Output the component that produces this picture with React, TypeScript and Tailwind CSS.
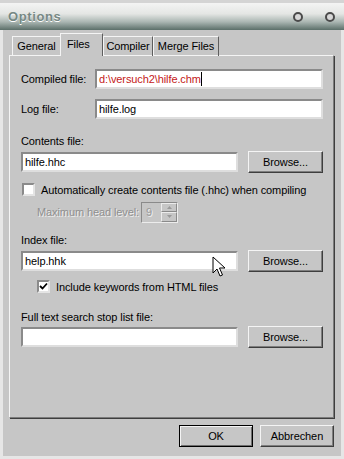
import React from "react";

const font = { fontFamily: '"Liberation Sans", Arial, sans-serif' };

export default function App() {
  return (
    <div
      style={font}
      className="relative w-[344px] h-[459px] overflow-hidden bg-[#c6c6c6] text-[11px] tracking-[-0.1px] leading-[14px] text-black whitespace-nowrap"
    >
      <TitleBar />
      <div className="h-[459px] border-l-[3px] border-r-[3px] border-b-[3px] border-l-[#e6e6e6] border-r-[#e6e6e6] border-b-[#e6e6e6] -mt-[30px] pt-[30px]">
        <div className="pl-[6px] pr-[7px]">
          <Tabs />
          <div className="h-[363px] border border-t-[#f4f4f4] border-l-[#f4f4f4] border-r-[#7c7c7c] border-b-[#7c7c7c] shadow-[1px_1px_0_#3e3e3e] pl-[11px] pr-[10px]">
            <div className="mt-[13px] flex items-center h-[20px]">
              <span className="w-[74px]">Compiled file:</span>
              <Field value="d:\versuch2\hilfe.chm" red className="flex-1" />
            </div>
            <div className="mt-[10px] flex items-center h-[20px]">
              <span className="w-[74px]">Log file:</span>
              <Field value="hilfe.log" className="flex-1" />
            </div>

            <div className="mt-[15px] h-[14px]">Contents file:</div>
            <div className="mt-[3px] flex items-center gap-[10px] h-[22px]">
              <Field value="hilfe.hhc" className="w-[217px]" />
              <Button>Browse...</Button>
            </div>
            <div className="mt-[10px] flex items-center gap-[6px] h-[13px] pl-[1px]">
              <Check />
              <span>Automatically create contents file (.hhc) when compiling</span>
            </div>
            <div className="mt-[5px] flex items-center h-[22px] pl-[16px]">
              <span className="text-[#8f8f8f] [text-shadow:1px_1px_0_#efefef] w-[104px] shrink-0">Maximum head level:</span>
              <Spinner />
            </div>

            <div className="mt-[10px] h-[14px]">Index file:</div>
            <div className="mt-[3px] flex items-center gap-[10px] h-[22px]">
              <Field value="help.hhk" className="w-[217px]" />
              <Button>Browse...</Button>
            </div>
            <div className="mt-[8px] flex items-center gap-[6px] h-[13px] pl-[16px]">
              <Check checked />
              <span>Include keywords from HTML files</span>
            </div>

            <div className="mt-[17px] h-[14px]">Full text search stop list file:</div>
            <div className="mt-[2px] flex items-center gap-[10px] h-[22px]">
              <Field value="" className="w-[217px]" />
              <Button>Browse...</Button>
            </div>
          </div>

          <div className="mt-[7px] flex justify-end gap-[7px] pr-0">
            <button className="w-[74px] h-[22px] border border-black bg-[#c6c6c6] shadow-[inset_1px_1px_0_#f4f4f4,inset_-1px_-1px_0_#6e6e6e]">
              OK
            </button>
            <Button wide>Abbrechen</Button>
          </div>
        </div>
      </div>
      <Cursor />
    </div>
  );
}

function TitleBar() {
  return (
    <div className="relative h-[30px] border-t-[3px] border-t-[#d4d4d4] bg-[linear-gradient(to_bottom,#f4f4f4_0%,#e4e6e4_40%,#aab6b2_70%,#5b6f69_100%)] flex items-center pl-[8px]">
      <span className="font-bold text-[13px] tracking-[0.6px] text-[#768884] [text-shadow:0_1px_0_#ffffff]">
        Options
      </span>
      <div className="ml-auto flex gap-[22px] pr-[9px]">
        <span className="w-[10px] h-[10px] rounded-full border-[2px] border-[#4a4a4a] bg-[#d8d8d8]" />
        <span className="w-[10px] h-[10px] rounded-full border-[2px] border-[#4a4a4a] bg-[#d8d8d8]" />
      </div>
    </div>
  );
}

function Tabs() {
  return (
    <div className="mt-[3px] h-[23px] flex items-end pl-[3px] -mb-[1px] relative z-10">
      <Tab label="General" w={49} />
      <div className="w-[43px] h-[23px] -ml-[1px] border border-b-0 border-t-[#f4f4f4] border-l-[#f4f4f4] border-r-[#5e5e5e] bg-[#c6c6c6] flex items-start pt-[3px] pl-[6px]">
        Files
      </div>
      <Tab label="Compiler" w={50} />
      <Tab label="Merge Files" w={66} />
    </div>
  );
}

function Tab({ label, w }: { label: string; w: number }) {
  return (
    <div
      style={{ width: w }}
      className="h-[20px] border border-b-0 border-t-[#f4f4f4] border-l-[#f4f4f4] border-r-[#5e5e5e] flex items-center justify-center pb-[1px]"
    >
      {label}
    </div>
  );
}

function Field({ value, red, className }: { value: string; red?: boolean; className?: string }) {
  return (
    <div
      className={`h-[20px] bg-white border-2 border-t-[#8a8a8a] border-l-[#8a8a8a] border-r-[#dedede] border-b-[#dedede] flex items-center pl-[2px] ${className}`}
    >
      <span className={red ? "text-[#c41818]" : ""}>{value}</span>
      {red && <span className="w-[1px] h-[14px] bg-black" />}
    </div>
  );
}

function Button({ children, wide }: { children: React.ReactNode; wide?: boolean }) {
  return (
    <button
      className={`${wide ? "w-[74px]" : "w-[75px]"} h-[22px] bg-[#c6c6c6] border border-t-[#f4f4f4] border-l-[#f4f4f4] border-r-[#3e3e3e] border-b-[#3e3e3e] shadow-[inset_-1px_-1px_0_#7e7e7e] flex items-center justify-center`}
    >
      {children}
    </button>
  );
}

function Check({ checked }: { checked?: boolean }) {
  return (
    <div className="w-[13px] h-[13px] shrink-0 bg-white border-2 border-t-[#8a8a8a] border-l-[#8a8a8a] border-r-[#e4e4e4] border-b-[#e4e4e4] flex items-center justify-center">
      {checked && (
        <svg width="9" height="9" viewBox="0 0 9 9">
          <path d="M1 4 L3.5 6.5 L8 1.5" stroke="black" strokeWidth="1.8" fill="none" />
        </svg>
      )}
    </div>
  );
}

function Spinner() {
  return (
    <div className="flex shrink-0 h-[21px] w-[37px] border border-t-[#8a8a8a] border-l-[#8a8a8a] border-r-[#ececec] border-b-[#ececec]">
      <div className="flex-1 pl-[4px] flex items-center text-[#9a9a9a] [text-shadow:1px_1px_0_#efefef]">9</div>
      <div className="w-[16px] flex flex-col">
        <div className="flex-1 border border-t-[#ececec] border-l-[#ececec] border-r-[#8a8a8a] border-b-[#8a8a8a] flex items-center justify-center">
          <svg width="5" height="3" viewBox="0 0 5 3"><path d="M2.5 0 L5 3 L0 3 Z" fill="#9a9a9a" /></svg>
        </div>
        <div className="flex-1 border border-t-[#ececec] border-l-[#ececec] border-r-[#8a8a8a] border-b-[#8a8a8a] flex items-center justify-center">
          <svg width="5" height="3" viewBox="0 0 5 3"><path d="M0 0 L5 0 L2.5 3 Z" fill="#9a9a9a" /></svg>
        </div>
      </div>
    </div>
  );
}

function Cursor() {
  return (
    <svg className="absolute left-[212px] top-[256px]" width="14" height="22" viewBox="0 0 14 22">
      <path
        d="M1 1 L1 17 L5 13 L8 20 L10.5 19 L7.5 12 L13 12 Z"
        fill="white"
        stroke="black"
        strokeWidth="1"
        strokeLinejoin="miter"
      />
    </svg>
  );
}
